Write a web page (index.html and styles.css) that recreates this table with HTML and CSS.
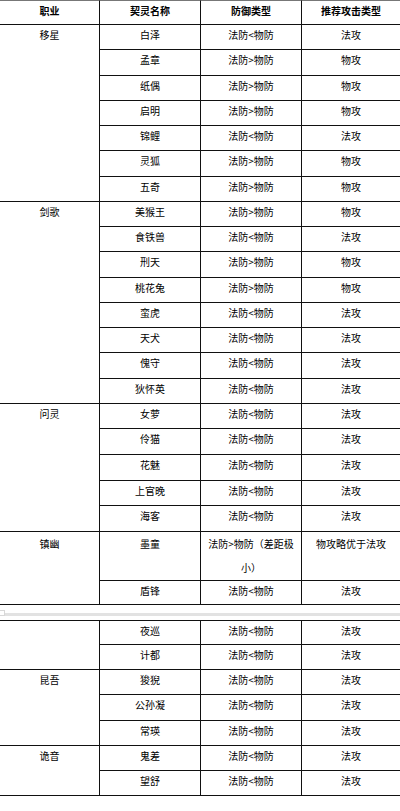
FILE: index.html
```html
<!DOCTYPE html>
<html lang="zh">
<head>
<meta charset="utf-8">
<link rel="stylesheet" href="styles.css">
</head>
<body>
<table class="grid">
  <colgroup><col class="c1"><col class="c2"><col class="c3"><col class="c4"></colgroup>
  <tr class="head"><th>职业</th><th>契灵名称</th><th>防御类型</th><th>推荐攻击类型</th></tr>
  <tr><td class="job" rowspan="7">移星</td><td>白泽</td><td>法防&lt;物防</td><td>法攻</td></tr>
  <tr><td>孟章</td><td>法防&gt;物防</td><td>物攻</td></tr>
  <tr><td>纸偶</td><td>法防&gt;物防</td><td>物攻</td></tr>
  <tr><td>启明</td><td>法防&gt;物防</td><td>物攻</td></tr>
  <tr><td>锦鲤</td><td>法防&lt;物防</td><td>法攻</td></tr>
  <tr><td>灵狐</td><td>法防&gt;物防</td><td>物攻</td></tr>
  <tr><td>五奇</td><td>法防&gt;物防</td><td>物攻</td></tr>
  <tr><td class="job" rowspan="8">剑歌</td><td>美猴王</td><td>法防&gt;物防</td><td>物攻</td></tr>
  <tr><td>食铁兽</td><td>法防&lt;物防</td><td>法攻</td></tr>
  <tr><td>刑天</td><td>法防&gt;物防</td><td>物攻</td></tr>
  <tr><td>桃花兔</td><td>法防&gt;物防</td><td>物攻</td></tr>
  <tr><td>蛮虎</td><td>法防&lt;物防</td><td>法攻</td></tr>
  <tr><td>天犬</td><td>法防&lt;物防</td><td>法攻</td></tr>
  <tr><td>傀守</td><td>法防&lt;物防</td><td>法攻</td></tr>
  <tr><td>狄怀英</td><td>法防&lt;物防</td><td>法攻</td></tr>
  <tr class="wide"><td class="job" rowspan="5">问灵</td><td>女萝</td><td>法防&lt;物防</td><td>法攻</td></tr>
  <tr class="wide"><td>伶猫</td><td>法防&lt;物防</td><td>法攻</td></tr>
  <tr class="wide"><td>花魅</td><td>法防&lt;物防</td><td>法攻</td></tr>
  <tr class="wide"><td>上官晚</td><td>法防&lt;物防</td><td>法攻</td></tr>
  <tr class="wide"><td>海客</td><td>法防&lt;物防</td><td>法攻</td></tr>
  <tr class="tall"><td class="job" rowspan="2">镇幽</td><td>墨童</td><td>法防&gt;物防（差距极小）</td><td>物攻略优于法攻</td></tr>
  <tr class="short"><td>盾锋</td><td>法防&lt;物防</td><td>法攻</td></tr>
</table>
<div class="pagebreak"><span class="mark"></span><div class="band"></div></div>
<table class="grid cont">
  <colgroup><col class="c1"><col class="c2"><col class="c3"><col class="c4"></colgroup>
  <tr><td class="job" rowspan="2"></td><td>夜巡</td><td>法防&lt;物防</td><td>法攻</td></tr>
  <tr><td>计都</td><td>法防&lt;物防</td><td>法攻</td></tr>
  <tr><td class="job" rowspan="3">昆吾</td><td>狻猊</td><td>法防&lt;物防</td><td>法攻</td></tr>
  <tr><td>公孙凝</td><td>法防&lt;物防</td><td>法攻</td></tr>
  <tr><td>常瑛</td><td>法防&lt;物防</td><td>法攻</td></tr>
  <tr><td class="job" rowspan="2">诡音</td><td>鬼差</td><td>法防&lt;物防</td><td>法攻</td></tr>
  <tr><td>望舒</td><td>法防&lt;物防</td><td>法攻</td></tr>
</table>
</body>
</html>
```
FILE: styles.css
```css
html, body {
  margin: 0;
  padding: 0;
  background: #fff;
}
body {
  font-family: "Noto Sans CJK SC", "Noto Sans", sans-serif;
  font-size: 10px;
  color: #000;
}
.grid {
  width: 400px;
  table-layout: fixed;
  border-collapse: separate;
  border-spacing: 0;
}
.c1 { width: 100px; }
.c2 { width: 101px; }
.c3 { width: 101px; }
.c4 { width: 98px; }
.grid th, .grid td {
  padding: 0 1px;
  text-align: center;
  vertical-align: top;
  line-height: 20px;
  border-bottom: 1px solid #111;
  border-right: 1px solid #111;
}
.grid th:last-child, .grid td:last-child {
  border-right: none;
}
.grid tr { height: 25.25px; }
.grid tr.head { height: 25px; }
.grid tr.wide { height: 25.6px; }
.grid .head th {
  border-top: 1px solid #777;
  font-weight: bold;
}
.grid tr.tall { height: 49px; }
.grid tr.short { height: 24.5px; }
.grid tr.tall td { line-height: 24px; }
.cont tr:first-child td { border-top: 1px solid #111; }
.pagebreak {
  height: 14.5px;
  padding-top: 8px;
  box-sizing: border-box;
  display: flex;
  align-items: flex-start;
}
.band {
  flex: 1;
  height: 3px;
  background: #e2e2e2;
}
.mark {
  width: 5px;
  height: 6px;
  margin-top: -3px;
  border: 1px solid #d8d8d8;
  border-left: none;
  box-sizing: border-box;
  flex: none;
}
```
